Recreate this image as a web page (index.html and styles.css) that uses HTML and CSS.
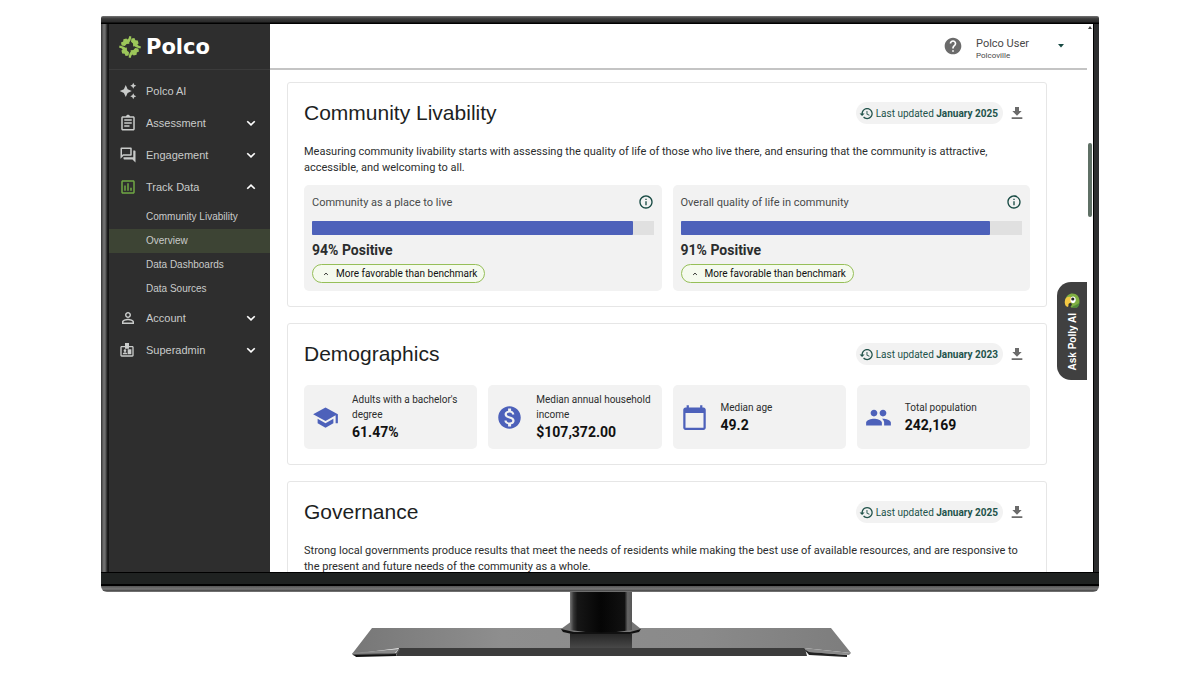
FILE: index.html
```html
<!DOCTYPE html>
<html lang="en">
<head>
    <meta charset="UTF-8">
    <meta name="viewport" content="width=device-width, initial-scale=1.0">
    <title>Polco</title>
    <link rel="stylesheet" href="styles.css">
</head>
<body>
    <!-- shared icons -->
    <svg class="sprite" width="0" height="0">
        <symbol id="down" viewBox="0 0 24 24"><path d="M4.500 8.500l7.500 7 7.500-7" fill="none" stroke="currentColor" stroke-width="3.400"/></symbol>
        <symbol id="up" viewBox="0 0 24 24"><path d="M4.500 15.500l7.500-7 7.500 7" fill="none" stroke="currentColor" stroke-width="3.400"/></symbol>
        <symbol id="history" viewBox="0 0 24 24"><path d="M13 3c-4.970 0-9 4.030-9 9H1l3.890 3.890.070.140L9 12H6c0-3.870 3.130-7 7-7s7 3.130 7 7-3.130 7-7 7c-1.930 0-3.680-.790-4.940-2.060l-1.420 1.420C8.270 19.990 10.510 21 13 21c4.970 0 9-4.030 9-9s-4.030-9-9-9zm-1 5v5l4.280 2.540.720-1.210-3.500-2.080V8H12z"/></symbol>
        <symbol id="download" viewBox="0 0 24 24"><path d="M19 9h-4V3H9v6H5l7 7 7-7zM4 18.500V21h16v-2.500H4z"/></symbol>
        <symbol id="info" viewBox="0 0 24 24"><path d="M11 7h2v2h-2zm0 4h2v6h-2zm1-9C6.480 2 2 6.480 2 12s4.480 10 10 10 10-4.480 10-10S17.520 2 12 2zm0 18c-4.410 0-8-3.590-8-8s3.590-8 8-8 8 3.590 8 8-3.590 8-8 8z"/></symbol>
    </svg>

    <div class="tv">
        <div class="screen">
            <nav class="sidebar">
                <a class="logo" href="#">
                    <svg width="24" height="24" viewBox="0 0 24 24" fill="#9cc65a">
                        <path id="leaf" d="M3 7.600L5.200 6.600 5.400 4.200 8.400 3.400 9.200 4.600 10.400 3.800 11.400 1l2 .6-.8 3.600-1.400 2.400.2 1.200-2.800.2L6.800 11 3.600 10.600z"/>
                        <use href="#leaf" transform="rotate(90 12 12)"/>
                        <use href="#leaf" transform="rotate(180 12 12)"/>
                        <use href="#leaf" transform="rotate(270 12 12)"/>
                    </svg>
                    <span>Polco</span>
                </a>
                <ul class="menu">
                    <li><a class="item" href="#">
                        <svg class="icon" viewBox="0 0 24 24"><path d="M19 9l1.250-2.750L23 5l-2.750-1.250L19 1l-1.250 2.750L15 5l2.750 1.250L19 9zm-7.500.5L9 4 6.500 9.500 1 12l5.500 2.500L9 20l2.500-5.500L17 12l-5.500-2.500zM19 15l-1.250 2.750L15 19l2.750 1.250L19 23l1.250-2.750L23 19l-2.750-1.250L19 15z"/></svg>
                        <span>Polco AI</span></a></li>
                    <li><a class="item" href="#">
                        <svg class="icon" viewBox="0 0 24 24"><path d="M7 15h7v2H7zm0-4h10v2H7zm0-4h10v2H7zm12-4h-4.180C14.400 1.840 13.300 1 12 1c-1.300 0-2.400.840-2.820 2H5c-1.100 0-2 .9-2 2v15c0 1.100.9 2 2 2h14c1.100 0 2-.9 2-2V5c0-1.100-.9-2-2-2zm0 17H5V5h14v15z"/></svg>
                        <span>Assessment</span><svg class="arrow"><use href="#down"/></svg></a></li>
                    <li><a class="item" href="#">
                        <svg class="icon" viewBox="0 0 24 24"><path d="M15 4v7H5.170L4 12.170V4h11m1-2H3c-.550 0-1 .450-1 1v14l4-4h10c.550 0 1-.450 1-1V3c0-.550-.450-1-1-1zm5 4h-2v9H6v2c0 .550.450 1 1 1h11l4 4V7c0-.550-.450-1-1-1z"/></svg>
                        <span>Engagement</span><svg class="arrow"><use href="#down"/></svg></a></li>
                    <li><a class="item" href="#">
                        <svg class="icon green" viewBox="0 0 24 24"><path d="M19 3H5c-1.100 0-2 .9-2 2v14c0 1.100.9 2 2 2h14c1.100 0 2-.9 2-2V5c0-1.100-.9-2-2-2zm0 16H5V5h14v14zM7 10h2v7H7zm4-3h2v10h-2zm4 6h2v4h-2z"/></svg>
                        <span>Track Data</span><svg class="arrow"><use href="#up"/></svg></a>
                        <ul class="submenu">
                            <li><a href="#">Community Livability</a></li>
                            <li><a class="active" href="#">Overview</a></li>
                            <li><a href="#">Data Dashboards</a></li>
                            <li><a href="#">Data Sources</a></li>
                        </ul>
                    </li>
                    <li><a class="item" href="#">
                        <svg class="icon" viewBox="0 0 24 24"><path d="M12 5.900c1.160 0 2.100.940 2.100 2.100s-.940 2.100-2.100 2.100S9.900 9.160 9.900 8s.940-2.100 2.100-2.100m0 9c2.970 0 6.100 1.460 6.100 2.100v1.100H5.900V17c0-.640 3.130-2.100 6.100-2.100M12 4C9.790 4 8 5.790 8 8s1.790 4 4 4 4-1.790 4-4-1.790-4-4-4zm0 9c-2.670 0-8 1.340-8 4v3h16v-3c0-2.660-5.330-4-8-4z"/></svg>
                        <span>Account</span><svg class="arrow"><use href="#down"/></svg></a></li>
                    <li><a class="item" href="#">
                        <svg class="icon admin" viewBox="0 0 24 24"><path d="M9 6a3 3 0 0 1 6 0h5c1.100 0 2 .9 2 2v12c0 1.100-.9 2-2 2H4c-1.100 0-2-.9-2-2V8c0-1.100.9-2 2-2zM4 8v12h16V8h-5v2H9V8z" fill-rule="evenodd"/><path d="M9 1.500h6V9H9z"/><circle cx="9" cy="13" r="2"/><path d="M5.500 18.500c0-4 7-4 7 0zM13 11h5.500v7.500H13z"/></svg>
                        <span>Superadmin</span><svg class="arrow"><use href="#down"/></svg></a></li>
                </ul>
            </nav>

            <div class="page">
                <header class="topbar">
                    <svg class="help" viewBox="0 0 24 24"><path d="M12 2C6.480 2 2 6.480 2 12s4.480 10 10 10 10-4.480 10-10S17.520 2 12 2zm1 17h-2v-2h2v2zm2.070-7.750l-.9.920C13.450 12.900 13 13.500 13 15h-2v-.5c0-1.100.450-2.100 1.170-2.830l1.240-1.260c.370-.360.590-.860.590-1.410 0-1.100-.9-2-2-2s-2 .9-2 2H8c0-2.210 1.790-4 4-4s4 1.790 4 4c0 .880-.360 1.680-.930 2.250z"/></svg>
                    <button class="user">
                        <span class="who"><span class="name">Polco User</span><span class="place">Polcoville</span></span>
                        <svg width="6" height="4" viewBox="0 0 6 4"><path d="M0 0h6L3 3.500z"/></svg>
                    </button>
                </header>

                <main>
                    <section class="card">
                        <div class="card-head">
                            <h2>Community Livability</h2>
                            <span class="updated"><svg><use href="#history"/></svg><span>Last updated <b>January 2025</b></span></span>
                            <button class="download" aria-label="Download"><svg><use href="#download"/></svg></button>
                        </div>
                        <p>Measuring community livability starts with assessing the quality of life of those who live there, and ensuring that the community is attractive, accessible, and welcoming to all.</p>
                        <div class="metrics">
                            <div class="metric">
                                <div class="metric-head"><span>Community as a place to live</span><svg><use href="#info"/></svg></div>
                                <div class="bar"><div class="fill" style="width: 94%"></div></div>
                                <div class="percent">94% Positive</div>
                                <span class="badge"><svg><use href="#up"/></svg>More favorable than benchmark</span>
                            </div>
                            <div class="metric">
                                <div class="metric-head"><span>Overall quality of life in community</span><svg><use href="#info"/></svg></div>
                                <div class="bar"><div class="fill" style="width: 90.5%"></div></div>
                                <div class="percent">91% Positive</div>
                                <span class="badge"><svg><use href="#up"/></svg>More favorable than benchmark</span>
                            </div>
                        </div>
                    </section>

                    <section class="card">
                        <div class="card-head">
                            <h2>Demographics</h2>
                            <span class="updated"><svg><use href="#history"/></svg><span>Last updated <b>January 2023</b></span></span>
                            <button class="download" aria-label="Download"><svg><use href="#download"/></svg></button>
                        </div>
                        <div class="tiles">
                            <div class="tile">
                                <svg viewBox="0 0 24 24"><path d="M5 13.180v4L12 21l7-3.820v-4L12 17l-7-3.820zM12 3L1 9l11 6 9-4.910V17h2V9L12 3z"/></svg>
                                <div>Adults with a bachelor's degree<strong>61.47%</strong></div>
                            </div>
                            <div class="tile">
                                <svg viewBox="0 0 24 24"><path d="M12 2C6.480 2 2 6.480 2 12s4.480 10 10 10 10-4.480 10-10S17.520 2 12 2zm1.410 16.090V20h-2.670v-1.930c-1.710-.360-3.160-1.460-3.270-3.400h1.960c.1 1.050.820 1.870 2.650 1.870 1.960 0 2.400-.980 2.400-1.590 0-.830-.440-1.610-2.670-2.140-2.480-.6-4.180-1.620-4.180-3.670 0-1.720 1.390-2.840 3.110-3.210V4h2.670v1.950c1.860.450 2.790 1.860 2.850 3.390H14.300c-.050-1.110-.640-1.870-2.220-1.870-1.500 0-2.400.680-2.400 1.640 0 .840.650 1.390 2.670 1.910s4.180 1.390 4.180 3.910c-.010 1.830-1.380 2.830-3.120 3.160z"/></svg>
                                <div>Median annual household income<strong>$107,372.00</strong></div>
                            </div>
                            <div class="tile">
                                <svg viewBox="0 0 24 24"><path d="M20 3h-1V1h-2v2H7V1H5v2H4c-1.100 0-2 .9-2 2v16c0 1.100.9 2 2 2h16c1.100 0 2-.9 2-2V5c0-1.100-.9-2-2-2zm0 18H4V8h16v13z"/></svg>
                                <div>Median age<strong>49.2</strong></div>
                            </div>
                            <div class="tile">
                                <svg viewBox="0 0 24 24"><path d="M16 11c1.660 0 2.990-1.340 2.990-3S17.660 5 16 5c-1.660 0-3 1.340-3 3s1.340 3 3 3zm-8 0c1.660 0 2.990-1.340 2.990-3S9.660 5 8 5C6.340 5 5 6.340 5 8s1.340 3 3 3zm0 2c-2.330 0-7 1.170-7 3.500V19h14v-2.500c0-2.330-4.670-3.500-7-3.500zm8 0c-.290 0-.620.020-.970.050 1.160.840 1.970 1.970 1.970 3.450V19h6v-2.500c0-2.330-4.670-3.500-7-3.500z"/></svg>
                                <div>Total population<strong>242,169</strong></div>
                            </div>
                        </div>
                    </section>

                    <section class="card">
                        <div class="card-head">
                            <h2>Governance</h2>
                            <span class="updated"><svg><use href="#history"/></svg><span>Last updated <b>January 2025</b></span></span>
                            <button class="download" aria-label="Download"><svg><use href="#download"/></svg></button>
                        </div>
                        <p>Strong local governments produce results that meet the needs of residents while making the best use of available resources, and are responsive to the present and future needs of the community as a whole.</p>
                    </section>
                </main>
            </div>

            <div class="scrollbar">
                <svg width="4" height="3" viewBox="0 0 4 3"><path d="M0 3L2 0l2 3z"/></svg>
                <div class="thumb"></div>
            </div>

            <button class="polly">
                <svg viewBox="0 0 16 15">
                    <path d="M1 8C2 2.500 5 .5 8.500.5c4 0 7 3 7 7.500 0 3-1 5-2.500 6.500H7L5 8z" fill="#7fae42"/>
                    <path d="M8 14.500c1-2 5-2 7.500-5-.2 2.500-1 4-2.500 5z" fill="#4f8a3a"/>
                    <path d="M1 11C0 6 3 2.500 6.500 4c1.500 1 1 4 .5 6l-2 .5-1 3.500C2 13.500 1.300 12.500 1 11z" fill="#f3c843"/>
                    <path d="M4.500 11L7 9.500l1 2.500-2.500 2z" fill="#333"/>
                    <path d="M6.500 6.500C6.500 4 8 3.200 9.500 3.500s2.500 2 2.200 4-2 3-3.500 2.500-1.700-2-1.700-3.500z" fill="#fff"/>
                    <circle cx="8.800" cy="6" r="1.600" fill="#222"/>
                </svg>
                <span>Ask Polly AI</span>
            </button>
        </div>
    </div>

    <svg class="stand" viewBox="0 0 496 66">
        <defs>
            <linearGradient id="base" x1="0" x2="1" y1="0" y2="0">
                <stop offset="0" stop-color="#777"/><stop offset=".3" stop-color="#8e8e8e"/>
                <stop offset=".7" stop-color="#8a8a8a"/><stop offset="1" stop-color="#7d7d7d"/>
            </linearGradient>
            <linearGradient id="neck" x1="0" x2="1" y1="0" y2="0">
                <stop offset="0" stop-color="#777"/><stop offset=".06" stop-color="#333"/><stop offset=".12" stop-color="#161616"/>
                <stop offset=".5" stop-color="#050505"/><stop offset=".88" stop-color="#111"/><stop offset=".93" stop-color="#666"/><stop offset="1" stop-color="#555"/>
            </linearGradient>
            <linearGradient id="shade" x1="0" x2="0" y1="0" y2="1">
                <stop offset="0" stop-color="#222"/><stop offset="1" stop-color="#484848"/>
            </linearGradient>
        </defs>
        <path d="M20 36h459l20 25-47-5H48L0 62z" fill="url(#base)"/>
        <path d="M47 56h406l2 8H44z" fill="#3c3c3c"/>
        <path d="M0 61l47-4-4 4-41 3z" fill="#8a8a8a"/>
        <path d="M0 62l44-1 3-4 1 .5-3 5-43 1z" fill="#555"/>
        <path d="M2 63l42-1v2L4 65z" fill="#111"/>
        <path d="M499 61l-47-5 3 4 42 3z" fill="#8a8a8a"/>
        <path d="M452 57l5 6 38 2v-2l-38-3z" fill="#222"/>
        <path d="M218 40h62v16h-62z" fill="url(#shade)"/>
        <path d="M209 37l11-8h59l10 8-10 5h-59z" fill="#777"/>
        <path d="M209 37l13 3h56l11-3-2 3-9 2h-58l-9-2z" fill="#111"/>
        <path d="M218 0h62v38q-31 5-62 0z" fill="url(#neck)"/>
    </svg>
</body>
</html>
```
FILE: styles.css
```css
* {
    box-sizing: border-box;
}
body {
    margin: 0;
    padding: 16px 101px 17px;
    height: 100vh;
    display: flex;
    flex-direction: column;
    background-color: white;
    font-family: Roboto, sans-serif;
    font-size: 11px;
    color: #2b2d2d;
}
.sprite {
    position: absolute;
}
ul {
    list-style: none;
    margin: 0;
    padding: 0;
}
a {
    color: inherit;
    text-decoration: none;
}
button {
    border: none;
    background: none;
    padding: 0;
    font: inherit;
    color: inherit;
}
svg {
    fill: currentColor;
    flex-shrink: 0;
}

/* television */
.tv {
    flex: 1;
    min-height: 0;
    padding: 8px 6px 20px 8px;
    border-radius: 2px 2px 6px 6px;
    background:
        linear-gradient(#000 0 1px, #1f2221 1px 12px, #000 12px 14px, #555 14px, #777 17px, #444 19px, #999 20px) bottom / 100% 20px no-repeat,
        linear-gradient(#777, #444 2px, #333 4px, #2a2a2a 6px, #000 7px) top / 100% 8px no-repeat,
        linear-gradient(90deg, #333, #777 3px, #555 5px, #222 6px, #111 8px) left / 8px 100% no-repeat,
        linear-gradient(90deg, #000 0 1px, #2d2e2f 1px) right / 6px 100% no-repeat,
        #272829;
}
.screen {
    height: 100%;
    display: flex;
    position: relative;
    overflow: hidden;
    background-color: white;
}
.stand {
    width: 496px;
    height: 66px;
    align-self: center;
    overflow: visible;
}

/* sidebar */
.sidebar {
    width: 161px;
    background-color: #2e2e2e;
    color: #c9cbca;
    font-family: "Liberation Sans", Arial, sans-serif;
}
.logo {
    display: flex;
    align-items: center;
    gap: 4px;
    height: 46px;
    padding-left: 9px;
    border-bottom: 1px solid #3b3b3b;
    color: white;
    font-family: "DejaVu Sans", sans-serif;
    font-size: 21px;
    font-weight: bold;
}
.logo svg {
    fill: #9cc65a;
}
.menu {
    padding-top: 5px;
}
.item {
    display: flex;
    align-items: center;
    height: 32px;
    padding: 0 13px 0 10px;
}
.item span {
    flex: 1;
}
.icon {
    width: 18px;
    height: 18px;
    margin-right: 9px;
}
.green {
    color: #70a844;
}
.admin {
    width: 16px;
    height: 16px;
    margin-right: 11px;
}
.arrow {
    width: 12px;
    height: 12px;
    color: white;
}
.submenu {
    padding: 2px 0 1px;
    font-size: 10px;
}
.submenu a {
    display: block;
    padding-left: 37px;
    line-height: 24px;
}
.submenu .active {
    background-color: #3d4434;
}

/* page */
.page {
    flex: 1;
    min-width: 0;
}
.topbar {
    display: flex;
    align-items: center;
    justify-content: flex-end;
    gap: 13px;
    height: 46px;
    padding-right: 23px;
    border-bottom: 2px solid #c4c4c4;
}
.help {
    width: 20px;
    height: 20px;
    color: #6b6b6b;
}
.user {
    display: flex;
    align-items: center;
    gap: 29px;
    color: #174a43;
    text-align: left;
}
.who {
    padding-top: 6px;
    color: #484848;
}
.name, .place {
    display: block;
}
.name {
    line-height: 14px;
}
.place {
    font-size: 8px;
    line-height: 10px;
}
main {
    display: flex;
    flex-direction: column;
    gap: 16px;
    padding: 12px 40px 0 17px;
}
.card {
    padding: 15px 16px;
    border: 1px solid #e6e6e6;
    border-radius: 3px;
}
.card-head {
    display: flex;
    align-items: center;
    height: 30px;
    margin-bottom: 16px;
}
h2 {
    flex: 1;
    margin: 0;
    font-family: "Liberation Sans", Arial, sans-serif;
    font-size: 21px;
    font-weight: normal;
    color: #1d1f1f;
}
.updated {
    display: flex;
    align-items: center;
    gap: 2px;
    height: 22px;
    padding: 0 5px 0 3px;
    border-radius: 11px;
    background-color: #f2f2f2;
    color: #22534b;
    font-size: 10px;
}
.updated svg {
    width: 15px;
    height: 15px;
}
.download {
    margin: 0 5px 0 6px;
    color: #6b6b6b;
}
.download svg {
    display: block;
    width: 16px;
    height: 16px;
}
.card p {
    margin: 0 0 9px;
    line-height: 16px;
}
.metrics {
    display: grid;
    grid-template-columns: 1fr 1fr;
    gap: 11px;
}
.metric {
    padding: 8px;
    border-radius: 5px;
    background-color: #f2f2f2;
}
.metric-head {
    display: flex;
    align-items: center;
    justify-content: space-between;
    height: 18px;
    margin-bottom: 10px;
    color: #484a4a;
}
.metric-head svg {
    width: 16px;
    height: 16px;
    color: #174a43;
}
.bar {
    height: 14px;
    background-color: #e0e0e0;
}
.fill {
    height: 100%;
    border-radius: 1px;
    background-color: #4d61ba;
}
.percent {
    margin: 5px 0 4px;
    font-size: 14px;
    font-weight: bold;
    line-height: 20px;
}
.badge {
    display: flex;
    align-items: center;
    gap: 7px;
    width: fit-content;
    height: 19px;
    padding: 0 7px 0 10px;
    border: 1px solid #96bf58;
    border-radius: 10px;
    background-color: #f5faee;
    color: #111;
    font-size: 10px;
}
.badge svg {
    width: 6px;
    height: 6px;
}
.tiles {
    display: grid;
    grid-template-columns: repeat(4, 1fr);
    gap: 11px;
}
.tile {
    display: flex;
    align-items: center;
    gap: 13px;
    height: 64px;
    padding: 0 8px;
    border-radius: 5px;
    background-color: #f2f2f2;
    font-size: 10px;
    line-height: 15px;
}
.tile svg {
    width: 27px;
    height: 27px;
    color: #4d61ba;
}
.tile strong {
    display: block;
    color: #111;
    font-size: 14px;
    line-height: 20px;
}

/* right edge */
.scrollbar {
    display: flex;
    flex-direction: column;
    align-items: center;
    width: 6px;
    padding-top: 2px;
    color: #444;
}
.thumb {
    width: 4px;
    height: 74px;
    margin-top: 114px;
    border-radius: 2px;
    background-color: #5f7065;
}
.polly {
    position: absolute;
    top: 258px;
    right: 6px;
    display: flex;
    flex-direction: column;
    align-items: center;
    gap: 5px;
    width: 30px;
    padding: 11px 0 10px;
    border-radius: 14px 0 0 14px;
    background-color: #404040;
    color: white;
    font-family: "Liberation Sans", Arial, sans-serif;
    font-size: 10px;
    font-weight: bold;
}
.polly svg {
    width: 16px;
    height: 15px;
}
.polly span {
    writing-mode: vertical-rl;
    transform: rotate(180deg);
}
```
